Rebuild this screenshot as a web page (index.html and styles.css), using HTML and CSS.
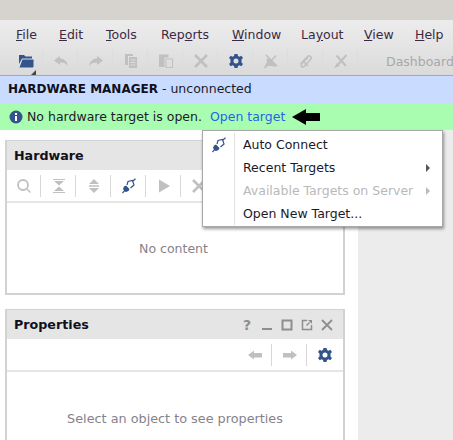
FILE: index.html
```html
<!DOCTYPE html>
<html lang="en">
<head>
    <meta charset="UTF-8">
    <meta name="viewport" content="width=device-width, initial-scale=1.0">
    <title>Hardware Manager</title>
    <link rel="stylesheet" href="styles.css">
</head>
<body>
    <svg class="defs" width="0" height="0">
        <symbol id="i-back" viewBox="0 0 16 16"><path d="M1 8 L7 3.500 V6 H15 V10.500 H7 V12.500 Z"/></symbol>
        <symbol id="i-fwd" viewBox="0 0 16 16"><path d="M15 8 L9 3.500 V6 H1 V10.500 H9 V12.500 Z"/></symbol>
        <symbol id="i-undo" viewBox="0 0 16 16"><path d="M1 7.500 L7 3 V5.500 C11 5.500 14 8 15 13 C13 10.500 11 9.500 7 9.500 V12 Z"/></symbol>
        <symbol id="i-redo" viewBox="0 0 16 16"><path d="M15 7.500 L9 3 V5.500 C5 5.500 2 8 1 13 C3 10.500 5 9.500 9 9.500 V12 Z"/></symbol>
        <symbol id="i-gear" viewBox="0 0 16 16"><path fill-rule="evenodd" d="M6.500 1 H9.500 L10 3 L11.500 3.700 L13.300 2.700 L15 5 L13.500 6.400 V9.600 L15 11 L13.300 13.300 L11.500 12.300 L10 13 L9.500 15 H6.500 L6 13 L4.500 12.300 L2.700 13.300 L1 11 L2.500 9.600 V6.400 L1 5 L2.700 2.700 L4.500 3.700 L6 3 Z M8 5.500 A2.500 2.500 0 1 0 8 10.500 A2.500 2.500 0 1 0 8 5.500 Z"/></symbol>
        <symbol id="i-plug" viewBox="0 0 16 16"><path d="M1 14.500 L3 12.500 L2 11 L3 8.500 L5 7.500 L8.500 11 L7.500 13 L5 14 L3.500 13.500 L2 15.500 Z"/><path fill="none" stroke="currentColor" stroke-width="1.200" d="M6 7 L7 3.500 L11.500 2.500 L13 7 L9.500 10 M12 3 L14.500 0.800"/></symbol>
        <symbol id="i-cross" viewBox="0 0 16 16"><path fill="none" stroke="currentColor" stroke-width="2.600" d="M2 2 L14 14 M14 2 L2 14"/></symbol>
    </svg>

    <div class="titlebar"></div>

    <div class="menubar">
        <span class="menu-item"><u>F</u>ile</span>
        <span class="menu-item"><u>E</u>dit</span>
        <span class="menu-item"><u>T</u>ools</span>
        <span class="menu-item">Rep<u>o</u>rts</span>
        <span class="menu-item"><u>W</u>indow</span>
        <span class="menu-item">La<u>y</u>out</span>
        <span class="menu-item"><u>V</u>iew</span>
        <span class="menu-item"><u>H</u>elp</span>
    </div>

    <div class="toolbar">
        <span class="tool tool-open">
            <svg class="icon blue" viewBox="0 0 16 16"><path d="M1 2 H6 L7.500 3.500 H14 V5.500 H4 L1 11 Z"/><path d="M4.500 6.500 H15.500 V13 C15.500 14 15 14.500 14 14.500 H1.500 Z"/></svg>
            <span class="corner"></span>
        </span>
        <span class="tool"><svg class="icon grey"><use href="#i-undo"/></svg></span>
        <span class="tool"><svg class="icon grey"><use href="#i-redo"/></svg></span>
        <span class="tool">
            <svg class="icon grey" viewBox="0 0 16 16"><path d="M2 1 H10 V3 H5 V12 H2 Z"/><path fill-rule="evenodd" d="M6 4 H14 V15 H6 Z M7.500 6.500 V7.500 H12.500 V6.500 Z M7.500 9 V10 H12.500 V9 Z M7.500 11.500 V12.500 H12.500 V11.500 Z"/></svg>
        </span>
        <span class="tool">
            <svg class="icon grey" viewBox="0 0 16 16"><path d="M1 1.500 H10.500 V4.500 H6.500 V14 H1 Z"/><path fill-rule="evenodd" d="M7.500 5.500 H15 V15 H7.500 Z M8.500 6.500 V14 H14 V6.500 Z"/></svg>
        </span>
        <span class="tool"><svg class="icon grey"><use href="#i-cross"/></svg></span>
        <span class="tool"><svg class="icon blue"><use href="#i-gear"/></svg></span>
        <span class="tool">
            <svg class="icon grey" viewBox="0 0 16 16"><path d="M1 14.500 L4 9 L3.500 6 L6 5 L11 10 L13 12 L12.500 14 L9 13 L4.500 13 L2.500 15.500 Z"/><path fill="none" stroke="currentColor" stroke-width="1.600" d="M3 2 L14 13 M6 10 L13 2.500"/></svg>
        </span>
        <span class="tool">
            <svg class="icon grey" viewBox="0 0 16 16"><path fill="none" stroke="currentColor" stroke-width="1.600" d="M2.500 11 L9.500 3.500 C11.500 1.500 14.500 4.500 12.500 6.500 L6 13.500 C4.500 15 2 12.500 3.500 11 L10 4.500 M6 9 L10 13"/></svg>
        </span>
        <span class="tool">
            <svg class="icon grey" viewBox="0 0 16 16"><path d="M1 15 L4 10 L7 13 Z"/><path fill="none" stroke="currentColor" stroke-width="2" d="M3.500 2.500 L13 13 M5 11.500 L13.500 2"/></svg>
        </span>
        <span class="dashboard">Dashboard</span>
    </div>

    <div class="manager-bar"><b>HARDWARE MANAGER</b> - unconnected</div>

    <div class="notice-bar">
        <svg class="info" viewBox="0 0 14 14"><circle cx="7" cy="7" r="6.500"/><rect class="info-mark" x="6" y="6" width="2" height="5"/><rect class="info-mark" x="6" y="3" width="2" height="2"/></svg>
        <span>No hardware target is open.</span>
        <a class="notice-link">Open target</a>
        <svg class="pointer" viewBox="0 0 28 16"><path d="M0 8 L14 0 V4 H28 V12 H14 V16 Z"/></svg>
    </div>

    <div class="workspace">
        <div class="left-col">
            <section class="panel panel-hw">
                <header class="panel-head"><h2>Hardware</h2></header>
                <div class="panel-tools">
                    <span class="tool">
                        <svg class="icon grey" viewBox="0 0 16 16"><circle cx="7" cy="7" r="5" fill="none" stroke="currentColor" stroke-width="1.800"/><path d="M10.500 11.500 L11.500 10.500 L15 14 L14 15 Z"/></svg>
                    </span>
                    <span class="tool">
                        <svg class="icon grey" viewBox="0 0 16 16"><path d="M2 1 H14 V2 H2 Z M3 3 H13 L8 7.500 Z M8 8.500 L13 13 H3 Z M2 14 H14 V15 H2 Z"/></svg>
                    </span>
                    <span class="tool">
                        <svg class="icon grey" viewBox="0 0 16 16"><path d="M8 1 L13 6 H3 Z M3 7.300 H13 V8.700 H3 Z M3 10 H13 L8 15 Z"/></svg>
                    </span>
                    <span class="tool"><svg class="icon blue"><use href="#i-plug"/></svg></span>
                    <span class="tool">
                        <svg class="icon grey" viewBox="0 0 16 16"><path d="M3 1.500 L14 8 L3 14.500 Z"/></svg>
                    </span>
                    <span class="tool"><svg class="icon grey"><use href="#i-cross"/></svg></span>
                </div>
                <div class="panel-body body-hw">No content</div>
            </section>

            <section class="panel panel-props">
                <header class="panel-head">
                    <h2>Properties</h2>
                    <div class="head-actions">
                        <span class="help">?</span>
                        <svg class="head-icon" viewBox="0 0 12 12"><rect x="1" y="9" width="10" height="2"/></svg>
                        <svg class="head-icon" viewBox="0 0 12 12"><rect x="1.500" y="1.500" width="9" height="9" fill="none" stroke="currentColor" stroke-width="2"/></svg>
                        <svg class="head-icon" viewBox="0 0 12 12"><path fill="none" stroke="currentColor" stroke-width="1.500" d="M6 1.500 H1.500 V10.500 H10.500 V6"/><path d="M7 1 H11 V5 Z M5 6 L8 3 L9 4 L6 7 Z"/></svg>
                        <svg class="head-icon" viewBox="0 0 12 12"><path fill="none" stroke="currentColor" stroke-width="1.800" d="M1 1 L11 11 M11 1 L1 11"/></svg>
                    </div>
                </header>
                <div class="panel-tools tools-right">
                    <span class="tool"><svg class="icon grey"><use href="#i-back"/></svg></span>
                    <span class="tool"><svg class="icon grey"><use href="#i-fwd"/></svg></span>
                    <span class="tool"><svg class="icon blue"><use href="#i-gear"/></svg></span>
                </div>
                <div class="panel-body body-props">Select an object to see properties</div>
            </section>
        </div>
        <div class="right-col"></div>
    </div>

    <div class="popup">
        <div class="popup-row">
            <span class="popup-icon"><svg class="icon blue"><use href="#i-plug"/></svg></span>
            <span class="popup-label">Auto Connect</span>
        </div>
        <div class="popup-row">
            <span class="popup-icon"></span>
            <span class="popup-label">Recent Targets</span>
            <span class="arrow"></span>
        </div>
        <div class="popup-row disabled">
            <span class="popup-icon"></span>
            <span class="popup-label">Available Targets on Server</span>
            <span class="arrow"></span>
        </div>
        <div class="popup-row">
            <span class="popup-icon"></span>
            <span class="popup-label">Open New Target...</span>
        </div>
    </div>
</body>
</html>
```

FILE: styles.css
```css
html, body {
    height: 100%;
    overflow: hidden;
}
body {
    margin: 0;
    font-family: "DejaVu Sans", sans-serif;
    font-size: 12.5px;
    color: #1a1a2a;
    background: #fff;
    position: relative;
}
.defs {
    position: absolute;
}
.titlebar {
    height: 20px;
    background: #d6d2ce;
}
.menubar {
    height: 27px;
    display: grid;
    grid-template-columns: 43px 47px 55px 71px 69px 63px 51px auto;
    align-items: center;
    padding: 2px 0 0 16px;
    box-sizing: border-box;
    background: linear-gradient(#ececec, #e4e4e4);
    color: #3a2a44;
}
.toolbar {
    height: 28px;
    display: flex;
    align-items: center;
    padding-left: 9px;
    border-bottom: 1px solid #a8a8a8;
    background: linear-gradient(#e4e4e4, #dadada);
    overflow: hidden;
}
.toolbar .tool {
    border-right-color: #dcdcdc;
}
.tool {
    width: 34px;
    height: 22px;
    margin-right: 1px;
    display: flex;
    align-items: center;
    justify-content: center;
    border-right: 1px solid #d8d8d8;
    box-sizing: border-box;
    flex: none;
}
.tool:last-child {
    border-right: none;
}
.tool-open {
    position: relative;
}
.corner {
    position: absolute;
    right: 6px;
    bottom: -3px;
    border-style: solid;
    border-width: 0 0 5px 5px;
    border-color: transparent transparent #444 transparent;
}
.icon {
    width: 16px;
    height: 16px;
    fill: currentColor;
}
.blue {
    color: #33538c;
}
.grey {
    color: #c0c0c0;
}
.dashboard {
    margin-left: 27px;
    color: #a8a8a8;
    white-space: nowrap;
}
.manager-bar {
    height: 27px;
    line-height: 26px;
    padding-left: 8px;
    background: #c9dcff;
}
.manager-bar b {
    color: #101020;
    font-size: 12px;
}
.notice-bar {
    height: 27px;
    display: flex;
    align-items: center;
    padding-left: 9px;
    background: #a9fdb0;
}
.info {
    width: 14px;
    height: 14px;
    margin-right: 4px;
    fill: #33538c;
}
.info-mark {
    fill: #fff;
}
.notice-link {
    margin-left: 8px;
    color: #2563ea;
}
.pointer {
    width: 28px;
    height: 16px;
    margin-left: 7px;
    fill: #000;
}
.workspace {
    display: flex;
    height: 310px;
    overflow: hidden;
}
.left-col {
    width: 358px;
    box-sizing: border-box;
    padding: 10px 13px 0 5px;
    display: flex;
    flex-direction: column;
    gap: 14px;
    flex: none;
}
.right-col {
    flex: 1;
    background: #ececec;
}
.panel {
    border: 2px solid #d2d2d2;
    border-top-width: 1px;
    box-sizing: border-box;
    flex: none;
}
.panel-hw {
    height: 155px;
}
.panel-props {
    height: 131px;
    border-bottom: none;
}
.panel-head {
    height: 29px;
    display: flex;
    align-items: center;
    justify-content: space-between;
    padding: 0 10px 0 7px;
    background: #e5e5e5;
}
.panel-head h2 {
    margin: 0;
    font-size: 12.7px;
    font-weight: bold;
    color: #101020;
}
.head-actions {
    display: flex;
    align-items: center;
    gap: 8px;
}
.help {
    font-weight: bold;
    font-size: 14px;
    color: #8e8e8e;
    margin-right: 2px;
}
.head-icon {
    width: 12px;
    height: 12px;
    fill: currentColor;
    color: #8e8e8e;
}
.panel-tools {
    height: 33px;
    display: flex;
    align-items: center;
    box-sizing: border-box;
    overflow: hidden;
    border-bottom: 2px solid #e5e5e5;
}
.tools-right {
    justify-content: flex-end;
}
.panel-body {
    height: 90px;
    display: flex;
    align-items: center;
    justify-content: center;
    color: #86828a;
}
.body-hw {
    padding-right: 3px;
    box-sizing: border-box;
}
.body-props {
    height: 92px;
    font-size: 12.8px;
}
.popup {
    position: absolute;
    left: 202px;
    top: 130px;
    width: 241px;
    height: 97px;
    box-sizing: border-box;
    padding: 2px 0;
    background: #fff;
    border: 1px solid #a8a8a8;
    box-shadow: 1px 2px 3px rgba(0, 0, 0, 0.4);
}
.popup-row {
    height: 23px;
    display: flex;
    align-items: center;
}
.popup-icon {
    width: 32px;
    height: 23px;
    flex: none;
    display: flex;
    align-items: center;
    justify-content: center;
    border-right: 1px solid #e2e2e2;
    box-sizing: border-box;
    margin-right: 8px;
}
.popup-label {
    flex: 1;
    color: #1a1a2a;
}
.arrow {
    border-style: solid;
    border-width: 4px 0 4px 4px;
    border-color: transparent transparent transparent #555;
    margin-right: 12px;
}
.disabled .popup-label {
    color: #b9b9b9;
}
.disabled .arrow {
    border-left-color: #bbb;
}
```
